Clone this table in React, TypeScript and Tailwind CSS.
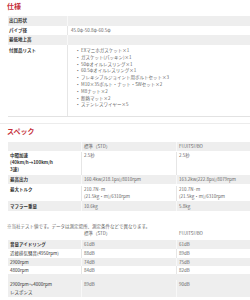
const font = { fontFamily: '"Noto Sans CJK JP", "Noto Sans", sans-serif' };

const accessories = [
  "EXマニホガスケット×1",
  "ガスケット(パッキン)×1",
  "50φオイルレスリング×1",
  "60.5φオイルレスリング×1",
  "フレキシブルジョイント用ボルトセット×3",
  "M10×35ボルト・ナット・SWセット×2",
  "M8ナット×2",
  "断熱マット×2",
  "ステンレスワイヤー×5",
];

// h: row height, pt: top padding, lh: line height
const spec = [
  { label: ["中間加速", "(40km/h→100km/h", "3速)"], std: ["2.5秒"], fuji: ["2.5秒"], gray: false, h: "h-[24px] pt-[1.5px] leading-[6.8px]" },
  { label: ["最高出力"], std: ["160.4kw(218.1ps)/8010rpm"], fuji: ["163.2kw(222.8ps)/8079rpm"], gray: true, h: "h-[9px] leading-[9px]" },
  {
    label: ["最大トルク"],
    std: ["210.7N·m", "(21.5kg・m)/6310rpm"],
    fuji: ["210.7N·m", "(21.5kg・m)/6310rpm"],
    gray: false,
    h: "h-[17px] pt-[2px] leading-[6.7px]",
  },
  { label: ["マフラー重量"], std: ["10.6kg"], fuji: ["5.8kg"], gray: true, h: "h-[10px] leading-[10px]" },
];

const sound = [
  { label: ["音量アイドリング"], std: "61dB", fuji: "61dB", gray: true, bold: true, h: "h-[8.5px] leading-[8.5px]" },
  { label: ["近接排気騒音(4950rpm)"], std: "88dB", fuji: "89dB", gray: false, bold: false, h: "h-[8.7px] leading-[8.7px]" },
  { label: ["2900rpm"], std: "74dB", fuji: "75dB", gray: true, bold: false, h: "h-[8px] leading-[8px]" },
  { label: ["4800rpm"], std: "84dB", fuji: "82dB", gray: false, bold: false, h: "h-[8.6px] leading-[8.6px]" },
  { label: ["2900rpm〜4000rpm", "レスポンス"], std: "89dB", fuji: "90dB", gray: true, bold: false, h: "h-[23px] pt-[5.7px] leading-[8px]" },
];

function Lines({ lines }: { lines: string[] }) {
  return (
    <>
      {lines.map((l, i) => (
        <div key={i}>{l}</div>
      ))}
    </>
  );
}

export default function App() {
  return (
    <div className="w-[250px] h-[300px] overflow-hidden bg-white text-[4.5px] text-[#666]" style={font}>
      {/* 仕様 */}
      <div className="pl-[7px] pt-[2px] h-[16px] text-[7px] font-bold leading-[9px] text-[#c5303a]">仕様</div>
      <div className="ml-[8px] w-[260px] border-b border-[#e2e2e2]">
        <div className="flex h-[9.7px] bg-[#eeeeee] leading-[9.7px]">
          <div className="w-[60px] pl-[1px] font-bold text-[#333] border-r border-[#f8f8f8]">出口形状</div>
          <div className="flex-1" />
        </div>
        <div className="flex h-[9.7px] leading-[9.7px]">
          <div className="w-[60px] pl-[1px] font-bold text-[#333] border-r border-[#e6e6e6]">パイプ径</div>
          <div className="flex-1 pl-[3px]">45.0φ-50.8φ-60.5φ</div>
        </div>
        <div className="flex h-[9.7px] bg-[#eeeeee] leading-[9.7px]">
          <div className="w-[60px] pl-[1px] font-bold text-[#333] border-r border-[#f8f8f8]">最低地上高</div>
          <div className="flex-1" />
        </div>
        <div className="flex">
          <div className="w-[60px] pl-[1px] pt-[2px] font-bold text-[#333] leading-[6.8px] border-r border-[#e6e6e6]">
            付属品リスト
          </div>
          <ul className="flex-1 pl-[9px] pt-[2px] pb-[7.7px] leading-[6.8px]">
            {accessories.map((a, i) => (
              <li key={i} className="flex gap-[2.5px]">
                <span>•</span>
                <span>{a}</span>
              </li>
            ))}
          </ul>
        </div>
      </div>
      <div className="mt-[6px] border-t border-[#ececec]" />

      {/* スペック */}
      <div className="pl-[7px] pt-[3px] h-[18px] text-[7px] font-bold leading-[9px] text-[#c5303a]">スペック</div>
      <div className="ml-[8px] w-[260px]">
        <div className="flex h-[9px] bg-[#eeeeee] leading-[9px]">
          <div className="w-[74px] border-r border-[#f8f8f8]" />
          <div className="w-[95px] pl-[2px] border-r border-[#f8f8f8]">標準（STD）</div>
          <div className="flex-1 pl-[2px]">FUJITSUBO</div>
        </div>
        {spec.map((r, i) => (
          <div key={i} className={`flex ${r.h} ${r.gray ? "bg-[#eeeeee]" : "bg-white"}`}>
            <div className={`w-[74px] pl-[2px] font-bold text-[#333] border-r ${r.gray ? "border-[#f8f8f8]" : "border-[#e6e6e6]"}`}>
              <Lines lines={r.label} />
            </div>
            <div className={`w-[95px] pl-[2px] border-r ${r.gray ? "border-[#f8f8f8]" : "border-[#e6e6e6]"}`}>
              <Lines lines={r.std} />
            </div>
            <div className="flex-1 pl-[2px]">
              <Lines lines={r.fuji} />
            </div>
          </div>
        ))}
      </div>

      {/* 音量 */}
      <div className="pl-[7px] pt-[12.5px] leading-[7px]">※当社テスト値です。データは測定場所、測定条件などで異なります。</div>
      <div className="ml-[8px] w-[260px]">
        <div className="flex h-[10px] leading-[7px]">
          <div className="w-[74px]" />
          <div className="w-[95px] pl-[2px]">標準（STD）</div>
          <div className="flex-1 pl-[2px]">FUJITSUBO</div>
        </div>
        {sound.map((r, i) => (
          <div key={i} className={`flex ${r.h} ${r.gray ? "bg-[#eeeeee]" : "bg-white"}`}>
            <div className={`w-[74px] pl-[2px] text-[#333] border-r ${r.bold ? "font-bold" : ""} ${r.gray ? "border-[#f8f8f8]" : "border-[#e6e6e6]"}`}>
              <Lines lines={r.label} />
            </div>
            <div className={`w-[95px] pl-[2px] border-r ${r.gray ? "border-[#f8f8f8]" : "border-[#e6e6e6]"}`}>{r.std}</div>
            <div className="flex-1 pl-[2px]">{r.fuji}</div>
          </div>
        ))}
      </div>
    </div>
  );
}
